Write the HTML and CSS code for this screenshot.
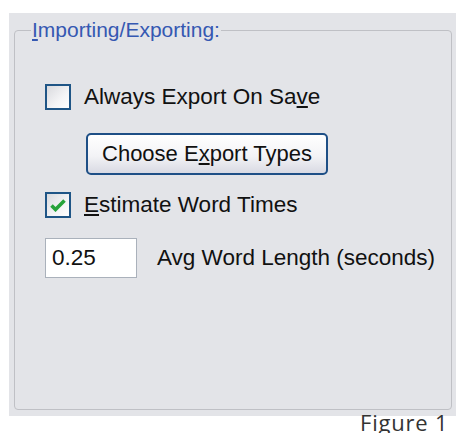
FILE: index.html
```html
<!DOCTYPE html>
<html lang="en">
<head>
  <meta charset="UTF-8">
  <title>Importing/Exporting</title>
  <link rel="stylesheet" href="styles.css">
</head>
<body>
  <!-- Options panel -->
  <div class="panel">
    <fieldset class="group">
      <legend><u>I</u>mporting/Exporting:</legend>

      <label class="check-row">
        <span class="box"></span>
        <span>Always Export On Sa<u>v</u>e</span>
      </label>

      <button class="btn">Choose E<u>x</u>port Types</button>

      <label class="check-row checked">
        <span class="box">
          <svg width="16" height="14" viewBox="0 0 16 14"><path d="M1.5 7.5 L5.5 11.5 L14.5 2.5" fill="none" stroke="#27a33a" stroke-width="3.6"/></svg>
        </span>
        <span><u>E</u>stimate Word Times</span>
      </label>

      <div class="field-row">
        <input class="num" type="text" value="0.25">
        <span>Avg Word Length (seconds)</span>
      </div>
    </fieldset>
  </div>

  <div class="caption">Figure 1</div>
</body>
</html>
```

FILE: styles.css
```css
body {
  margin: 0;
  background: #fff;
  font-family: 'Liberation Sans', Arial, sans-serif;
  color: #111;
  overflow: hidden;
}
.panel {
  margin: 13px 0 0 9px;
  width: 447px;
  height: 403px;
  background: #e3e4e8;
  box-sizing: border-box;
  padding: 5px 4px 0 5px;
}
.group {
  margin: 0;
  height: 392px;
  box-sizing: border-box;
  border: 1px solid #bfc0c5;
  border-radius: 4px;
  padding: 42px 0 0 30px;
}
.group legend {
  margin-left: -14px;
  padding: 0 1px;
  font-size: 21px;
  line-height: 24px;
  color: #3558b2;
}
.check-row {
  display: flex;
  align-items: center;
  gap: 13px;
  font-size: 22.5px;
  height: 26px;
}
.box {
  width: 26px;
  height: 26px;
  box-sizing: border-box;
  border: 2px solid #1f5586;
  background: linear-gradient(135deg, #d9dade 0%, #f4f4f6 60%, #fff 100%);
  display: flex;
  align-items: center;
  justify-content: center;
}
.btn {
  display: block;
  margin: 23px 0 17px 41px;
  width: 242px;
  height: 42px;
  border: 2px solid #1e4f86;
  border-radius: 5px;
  background: linear-gradient(#ffffff 0%, #f3f3f6 55%, #d9dae3 100%);
  font-family: inherit;
  font-size: 22px;
  color: #111;
  padding: 0;
}
.field-row {
  display: flex;
  align-items: center;
  gap: 20px;
  margin-top: 20px;
  font-size: 22.5px;
}
.num {
  width: 92px;
  height: 40px;
  box-sizing: border-box;
  border: 1px solid #aab1bb;
  background: #fff;
  font-family: inherit;
  font-size: 22.5px;
  color: #111;
  padding: 0 6px;
}
.caption {
  margin: -5px 0 0 360px;
  font-family: 'Open Sans', sans-serif;
  font-size: 22px;
  letter-spacing: 0.8px;
  color: #333;
  line-height: 22px;
  white-space: nowrap;
}
```
